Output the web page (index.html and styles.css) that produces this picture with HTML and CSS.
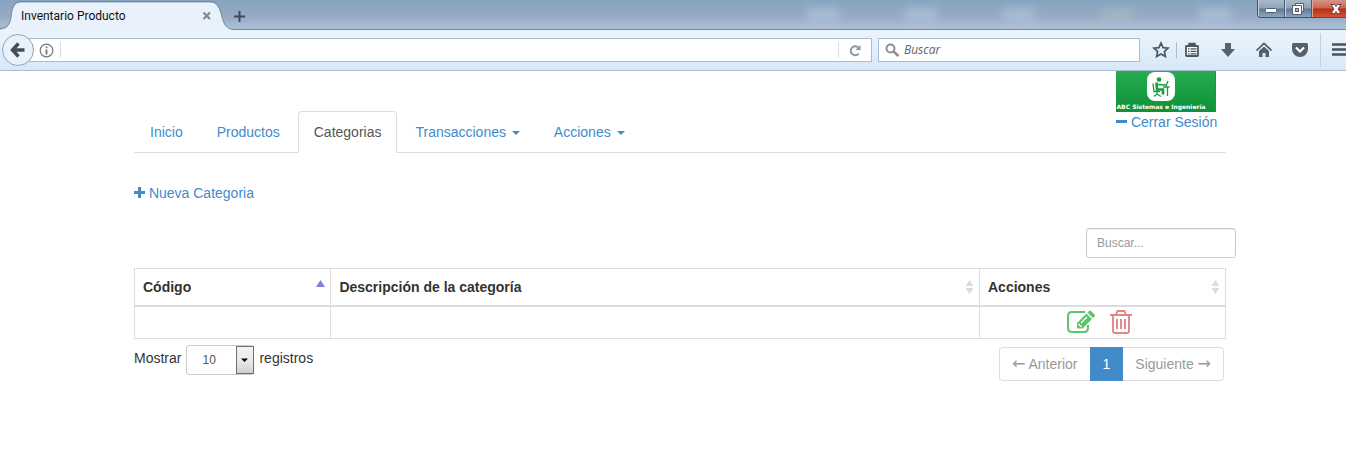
FILE: index.html
```html
<!DOCTYPE html>
<html lang="es">
<head>
<meta charset="utf-8">
<title>Inventario Producto</title>
<link rel="stylesheet" href="styles.css">
</head>
<body>
<div class="browser">
  <div class="titlebar">
    <div class="tab">
      <svg class="tab-shape" width="240" height="30" viewBox="0 0 240 30"><path d="M-1 29.5C8 29.5 10 24 11 17C12 8 14 2.500 21 2.500H210C217 2.500 220 8 222 17C224 24 226 29.500 235 29.500H240V31H-1Z" fill="#e9f2fb"/><path d="M-1 28.500C8 28.500 10 24 11 17C12 8 14 1.500 21 1.500H210C217 1.500 220 8 222 17C224 24 226 29.500 235 29.500H240" fill="none" stroke="#6d87a5"/></svg>
      <span class="tab-title">Inventario Producto</span>
      <button class="tab-close" aria-label="Cerrar pestaña"><svg width="10" height="10" viewBox="0 0 10 10"><path d="M1.500 1.500L8 8M8 1.500L1.500 8" stroke="#7e8a96" stroke-width="2.200"/></svg></button>
    </div>
    <button class="tab-new" aria-label="Nueva pestaña"><svg width="11" height="11" viewBox="0 0 11 11"><path d="M5.500 0V11M0 5.500H11" stroke="#3d4a59" stroke-width="2"/></svg></button>
    <div class="glows"><i></i><i></i><i></i><i class="green"></i><i></i></div>
    <div class="window-buttons">
      <button aria-label="Minimizar"><svg width="14" height="14" viewBox="0 0 14 14"><rect x="1.500" y="6.500" width="11" height="4" rx="1" fill="#fff" stroke="#565f72"/></svg></button>
      <button aria-label="Restaurar"><svg width="14" height="14" viewBox="0 0 14 14"><path d="M4.500 1.500h8v8h-2v3h-9v-9h3z" fill="#fff" stroke="#565f72"/><path d="M4.500 3.500h6v6" fill="none" stroke="#565f72"/><rect x="4.500" y="6.500" width="3" height="3" fill="#a9b6c8" stroke="#565f72"/></svg></button>
      <button class="close" aria-label="Cerrar"><svg width="14" height="14" viewBox="0 0 14 14"><path d="M2 2.500h3.500L7 4.500l1.500-2H12L9 7l3 4.500H8.500L7 9.500l-1.500 2H2L5 7z" fill="#fff" stroke="#6a4548"/></svg></button>
    </div>
  </div>
  <div class="toolbar">
    <button class="back" aria-label="Atrás"><svg width="16" height="16" viewBox="0 0 16 16"><path d="M8.500 1.500L2.500 8L8.500 14.500M2.500 8H14.500" fill="none" stroke="#434e5a" stroke-width="3.400"/></svg></button>
    <div class="address">
      <svg width="15" height="15" viewBox="0 0 15 15"><circle cx="7.500" cy="7.500" r="6.300" fill="none" stroke="#777" stroke-width="1.200"/><path d="M7.500 6.500V11.500M7.500 3.500V5.200" stroke="#777" stroke-width="1.800"/></svg>
      <input type="text" aria-label="Dirección">
      <button aria-label="Recargar"><svg width="13" height="13" viewBox="0 0 13 13"><path d="M9.800 9.500A4.500 4.500 0 1 1 9 3.200" fill="none" stroke="#8795a5" stroke-width="1.900"/><path d="M11.500 1V6H6.500z" fill="#8795a5"/></svg></button>
    </div>
    <label class="search">
      <svg width="15" height="15" viewBox="0 0 15 15"><circle cx="5.500" cy="5.500" r="4" fill="none" stroke="#8e8e8e" stroke-width="2"/><path d="M8.500 8.500L13.500 13" stroke="#8e8e8e" stroke-width="2.400"/></svg>
      <input type="text" placeholder="Buscar" aria-label="Buscar en la web">
    </label>
    <div class="tools">
      <button class="star" aria-label="Marcar"><svg width="18" height="18" viewBox="0 0 18 18"><path d="M9 2L11.100 6.600L16 7.200L12.400 10.600L13.400 15.600L9 13.100L4.600 15.600L5.600 10.600L2 7.200L6.900 6.600Z" fill="none" stroke="#4b5762" stroke-width="1.700"/></svg></button>
      <button class="list" aria-label="Marcadores"><svg width="18" height="18" viewBox="0 0 18 18"><path d="M3.500 5h11q.5 0 .5.500v9q0 .5-.5.500h-11q-.5 0-.5-.5v-9q0-.5.5-.5z" fill="#f4f8fc" stroke="#4b5762" stroke-width="1.800"/><path d="M6 5V2.500H12V5" fill="#4b5762" stroke="#4b5762" stroke-width="1.500"/><path d="M5 7.800h1.500M7.500 7.800h6M5 10.300h1.500M7.500 10.300h6M5 12.800h1.500M7.500 12.800h6" stroke="#4b5762" stroke-width="1.200"/></svg></button>
      <button aria-label="Descargas"><svg width="18" height="18" viewBox="0 0 18 18"><path d="M6 2h6v6h4l-7 8l-7-8h4z" fill="#56616c"/></svg></button>
      <button aria-label="Inicio del navegador"><svg width="18" height="18" viewBox="0 0 18 18"><path d="M1.500 9.500L9 2.500l7.500 7" fill="none" stroke="#4b5762" stroke-width="1.700"/><path d="M4 10l5-4.600l5 4.600v6h-3.500v-4h-3v4H4z" fill="#56616c"/></svg></button>
      <button aria-label="Pocket"><svg width="18" height="18" viewBox="0 0 18 18"><path d="M2.500 2h13q1.500 0 1.500 1.500V8a8 8 0 0 1-16 0V3.500Q1 2 2.500 2z" fill="#56616c"/><path d="M5 6.500l4 4l4-4" fill="none" stroke="#fff" stroke-width="2.200"/></svg></button>
      <button class="menu" aria-label="Menú"><svg width="18" height="18" viewBox="0 0 18 18"><path d="M2 3.500h16M2 8.500h16M2 13.500h16" stroke="#465462" stroke-width="2.400"/></svg></button>
    </div>
  </div>
</div>

<div class="container">
  <header class="header">
    <nav class="nav">
      <a href="#">Inicio</a>
      <a href="#">Productos</a>
      <a href="#" class="active">Categorias</a>
      <a href="#">Transacciones <span class="caret"></span></a>
      <a href="#">Acciones <span class="caret"></span></a>
    </nav>
    <div class="session">
      <div class="logo">
        <svg width="30" height="30" viewBox="0 0 30 30"><rect x="1" y="1" width="28" height="29" rx="8" fill="#fff"/><circle cx="13" cy="8.500" r="2.300" fill="#199b40"/><path d="M10.500 11.500L11 18.500H17V23.500" fill="none" stroke="#199b40" stroke-width="2.600"/><path d="M12 13.500L20 14M7 12.500L8 20.500H14M11 20.500V24M8 25.500L11 23l4 2.500M17 16H23.500M21.500 16V25M20 15L22 10" fill="none" stroke="#199b40" stroke-width="1.300"/></svg>
        <span>ABC Sistemas e Ingenieria</span>
      </div>
      <a href="#"><svg width="11" height="12" viewBox="0 0 11 12"><path d="M0 4h11v3H0z" fill="currentColor"/></svg> Cerrar Sesión</a>
    </div>
  </header>

  <main>
    <a href="#" class="new"><svg width="11" height="12" viewBox="0 0 11 12"><path d="M4 0h3v4h4v3H7v4H4V7H0V4h4z" fill="currentColor"/></svg> Nueva Categoria</a>
    <div class="filter"><input type="text" placeholder="Buscar..." aria-label="Buscar categoría"></div>

    <table class="grid">
      <thead>
        <tr>
          <th class="code"><div class="head">Código <svg width="9" height="14" viewBox="0 0 9 14"><path d="M0 7L4.500 0L9 7z" fill="#7f83df"/></svg></div></th>
          <th><div class="head">Descripción de la categoría <svg width="9" height="14" viewBox="0 0 9 14"><path d="M0.500 6L4.500 0L8.500 6zM0.500 8h8L4.500 14z" fill="#dcdcdc"/></svg></div></th>
          <th class="ops"><div class="head">Acciones <svg width="9" height="14" viewBox="0 0 9 14"><path d="M0.500 6L4.500 0L8.500 6zM0.500 8h8L4.500 14z" fill="#dcdcdc"/></svg></div></th>
        </tr>
      </thead>
      <tbody>
        <tr>
          <td></td>
          <td></td>
          <td>
            <div class="row-actions">
              <button class="edit" aria-label="Editar"><svg width="28" height="24" viewBox="0 0 28 24"><path d="M18 2H5Q1 2 1 6V18Q1 22 5 22H17Q21 22 21 18V15" fill="none" stroke="currentColor" stroke-width="2"/><path d="M10 18.500V13L19.500 3.500L25 9L15.500 18.500zM20.500 2.500L22 1Q23 0 24 1L27.500 4.500Q28.500 5.500 27.500 6.500L26 8z" fill="currentColor"/><path d="M11.500 14L14.500 17M14 13l6-6" stroke="#fff" stroke-width="1.300"/></svg></button>
              <button class="delete" aria-label="Eliminar"><svg width="22" height="24" viewBox="0 0 22 24"><path d="M0 5H22M6 5L7.500 1H14.500L16 5M3 5V20.500Q3 23 5 23H17Q19 23 19 20.500V5M7 9V19M11 9V19M15 9V19" fill="none" stroke="currentColor" stroke-width="1.900"/></svg></button>
            </div>
          </td>
        </tr>
      </tbody>
    </table>

    <div class="footer">
      <div class="length">
        <label for="length">Mostrar</label>
        <span class="select"><select id="length"><option>10</option></select><svg width="18" height="28" viewBox="0 0 18 28"><defs><linearGradient id="g" x2="0" y2="1"><stop stop-color="#f4f4f4"/><stop offset=".5" stop-color="#ebebeb"/><stop offset="1" stop-color="#cfcfcf"/></linearGradient></defs><rect x="0.500" y="0.500" width="17" height="27" fill="url(#g)" stroke="#707070"/><path d="M5 12.500h7L8.500 16z" fill="#000"/></svg></span>
        <span>registros</span>
      </div>
      <nav class="pages" aria-label="Paginación">
        <a href="#"><span class="arrow">←</span> Anterior</a>
        <a href="#" class="current">1</a>
        <a href="#">Siguiente <span class="arrow">→</span></a>
      </nav>
    </div>
  </main>
</div>
</body>
</html>
```

FILE: styles.css
```css
* { box-sizing: border-box; }
body { margin: 0; background: #fff; color: #333; font: 14px/20px "Liberation Sans", Arial, sans-serif; overflow-x: hidden; }
a { color: #428bca; text-decoration: none; }
button { padding: 0; border: 0; background: none; color: inherit; font: inherit; display: flex; align-items: center; justify-content: center; }
input, select { font: inherit; color: inherit; min-width: 0; }
svg { flex: none; }

/* browser frame */
.browser { font-family: "Open Sans", sans-serif; overflow: hidden; }
.titlebar { display: flex; align-items: center; position: relative; height: 30px; background: linear-gradient(#86a3bf 0, #98aac4 17px, #abc1d7 28px); border-bottom: 1px solid #6f879f; }
.tab { position: relative; display: flex; align-items: center; justify-content: space-between; width: 234px; height: 30px; padding: 2px 22px 0 21px; font: 12px/20px Roboto, sans-serif; color: #111; }
.tab-shape { position: absolute; left: 0; top: 0; }
.tab-title, .tab-close { position: relative; }
.tab-new { height: 30px; margin-top: 3px; }
.glows { flex: 1; display: flex; justify-content: flex-end; gap: 66px; padding-right: 26px; }
.glows i { width: 32px; height: 14px; background: #b2cbdf; opacity: .6; filter: blur(5px); }
.glows .green { background: #a9c0c2; }
.window-buttons { display: flex; align-self: flex-start; height: 18px; border: 1px solid #465263; border-width: 0 0 1px 1px; border-radius: 0 0 0 4px; overflow: hidden; }
.window-buttons button { width: 27px; border-right: 1px solid #4b5b70; background: linear-gradient(#a9b9cb 0, #90a3b9 8px, #5f7896 9px, #8da6c0 100%); box-shadow: inset 1px 0 #c6d2df; }
.window-buttons .close { width: 34px; padding-left: 14px; border-right: 0; background: linear-gradient(#d69488 0, #ca6650 8px, #bb2d12 9px, #d0543a 100%); box-shadow: inset 1px 0 #e4a69b; }

.toolbar { display: flex; align-items: center; height: 41px; padding-left: 2px; background: linear-gradient(#ebf4fc, #d8e8f8); border-bottom: 1px solid #a7bdd4; }
.back { position: relative; z-index: 1; width: 32px; height: 32px; border: 1px solid #8da5be; border-radius: 50%; background: #e9f2fb; flex: none; }
.address, .search { display: flex; align-items: center; height: 24px; background: #fff; border: 1px solid #a9bcd0; }
.address { flex: 1; margin-left: -5px; padding-left: 9px; }
.address input { flex: 1; height: 16px; margin-left: 6px; border: 0; border-left: 1px solid #d9dde2; border-right: 1px solid #d9dde2; outline: 0; }
.address button { width: 32px; }
.search { width: 262px; margin-left: 6px; padding-left: 6px; gap: 4px; }
.search input { flex: 1; border: 0; padding: 0; font-size: 12px; outline: 0; }
.search input::placeholder { color: #666; font-style: italic; opacity: 1; }
.tools { display: flex; align-items: center; width: 206px; height: 40px; overflow: hidden; }
.tools button { width: 36px; flex: none; }
.tools .star { height: 16px; margin-left: 6px; width: 31px; border-right: 1px solid #aebccb; }
.tools .list { width: 30px; margin-right: 3px; }
.tools .menu { height: 34px; border-left: 1px solid #c3d0de; margin-left: 2px; }

/* page */
.container { margin: 0 120px 0 134px; }
.header { display: flex; align-items: flex-start; border-bottom: 1px solid #ddd; }
.nav { display: flex; flex: 1; gap: 2px; padding-top: 40px; margin-bottom: -1px; }
.nav a { padding: 10px 15px; border: 1px solid transparent; border-radius: 4px 4px 0 0; }
.nav .active { color: #555; background: #fff; border-color: #ddd #ddd #fff; }
.caret { display: inline-block; margin-left: 2px; vertical-align: middle; border: 4px solid transparent; border-top-color: currentColor; border-bottom: 0; }
.session { width: 110px; white-space: nowrap; }
.session > a { display: block; }
.session > a svg, .new svg { vertical-align: -1px; }
.logo { display: flex; flex-direction: column; align-items: center; width: 100px; height: 41px; padding-right: 9px; background: linear-gradient(#26ac52, #0e9137); color: #fff; border-right: 1px solid #149b3e; }
.logo span { font: bold 6px/12px "DejaVu Sans", sans-serif; }
main { padding-top: 30px; }
.new { display: block; }
.filter { display: flex; justify-content: flex-end; margin: 25px -10px 10px 0; }
.filter input { width: 150px; height: 30px; padding: 5px 10px; font-size: 12px; border: 1px solid #ccc; border-radius: 3px; box-shadow: inset 0 1px 1px rgba(0,0,0,.075); }
.filter input::placeholder { color: #999; opacity: 1; }
.grid { width: 100%; border-collapse: collapse; table-layout: fixed; }
.grid th, .grid td { border: 1px solid #ddd; text-align: left; }
.grid th { padding: 8px; border-bottom-width: 2px; }
.grid td { height: 32px; padding: 0 8px; }
.grid .code { width: 18%; }
.grid .ops { width: 246px; }
.head { display: flex; align-items: center; justify-content: space-between; margin-right: -3px; }
.row-actions { display: flex; align-items: center; justify-content: center; gap: 15px; padding-right: 6px; }
.edit { color: #5cc46a; }
.delete { color: #e28585; }
.footer { display: flex; justify-content: space-between; align-items: flex-start; padding-top: 6px; }
.length { display: flex; gap: 5px; align-items: flex-start; }
.length label, .length > span:last-child { padding-top: 3px; }
.select { position: relative; display: flex; }
.select select { appearance: none; width: 68px; height: 30px; padding: 0 20px 0 15px; font-size: 12px; color: #555; background: #fff; border: 1px solid #ccc; border-radius: 3px; }
.select svg { position: absolute; right: 0; top: 1px; pointer-events: none; }
.pages { display: flex; margin: 2px 2px 0 0; }
.pages a { padding: 6px 12px; color: #999; border: 1px solid #ddd; }
.pages a:first-child { border-radius: 4px 0 0 4px; border-right: 0; }
.pages a:last-child { border-radius: 0 4px 4px 0; border-left: 0; }
.pages .current { color: #fff; background: #428bca; border-color: #428bca; }
.arrow { font-family: "DejaVu Sans", sans-serif; font-size: 16px; line-height: 16px; }
```
